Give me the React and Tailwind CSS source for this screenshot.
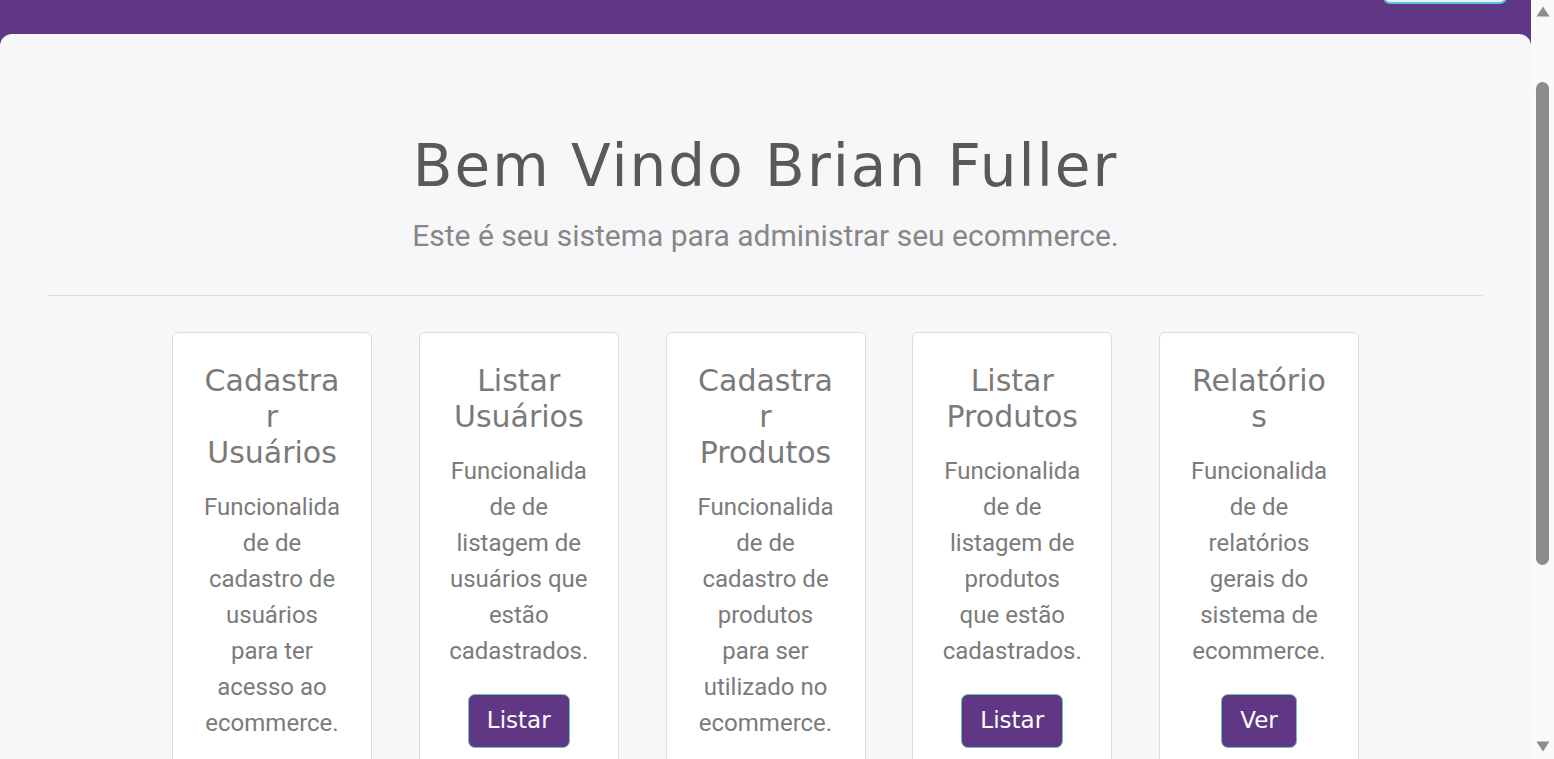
import React from "react";

const cards = [
  {
    title: "Cadastrar Usuários",
    text: "Funcionalidade de cadastro de usuários para ter acesso ao ecommerce.",
    action: "Cadastrar",
  },
  {
    title: "Listar Usuários",
    text: "Funcionalidade de listagem de usuários que estão cadastrados.",
    action: "Listar",
  },
  {
    title: "Cadastrar Produtos",
    text: "Funcionalidade de cadastro de produtos para ser utilizado no ecommerce.",
    action: "Cadastrar",
  },
  {
    title: "Listar Produtos",
    text: "Funcionalidade de listagem de produtos que estão cadastrados.",
    action: "Listar",
  },
  {
    title: "Relatórios",
    text: "Funcionalidade de relatórios gerais do sistema de ecommerce.",
    action: "Ver",
  },
];

const Card = ({ title, text, action }) => (
  <div className="w-[200px] shrink-0 bg-white border border-[#dcdde0] rounded-[6px] py-[30px] px-[29px] text-center break-words">
    <h3 className="font-['DejaVu_Sans',sans-serif] text-[30px] leading-[36px] text-[#7a7a7a]">
      {title}
    </h3>
    <p className="mt-[18px] font-['Roboto',sans-serif] text-[24px] leading-[36px] text-[#7b7b7b]">
      {text}
    </p>
    <button className="mt-[25px] inline-flex items-center h-[54px] px-[18px] rounded-[7px] border border-[#6cc3b5] bg-[#5f3784] text-white font-['DejaVu_Sans',sans-serif] text-[23px]">
      {action}
    </button>
  </div>
);

const ScrollBar = () => (
  <div className="w-[23px] shrink-0 bg-[#f9f9f9] flex flex-col items-center pt-[6px] pb-[7px]">
    <svg width="14" height="11" viewBox="0 0 14 11">
      <path d="M7 0.5 L13.5 10.5 L0.5 10.5 Z" fill="#8c8c8c" />
    </svg>
    <div className="mt-[65px] h-[483px] w-[13px] rounded-full bg-[#8c8c8c]" />
    <svg className="mt-auto" width="14" height="11" viewBox="0 0 14 11">
      <path d="M0.5 0.5 L13.5 0.5 L7 10.5 Z" fill="#8c8c8c" />
    </svg>
  </div>
);

export default function App() {
  return (
    <div className="h-screen flex overflow-hidden bg-[#f9f9f9]">
      <div className="flex-1 flex flex-col bg-[#5f3784]">
        <header className="h-[34px] shrink-0 flex justify-end items-start pr-[24px]">
          <div className="w-[124px] h-[44px] -mt-[40px] rounded-[7px] border-2 border-[#5bc0de] bg-[#e9f5f8]" />
        </header>
        <main className="flex-1 overflow-hidden bg-[#f7f7f9] rounded-t-[12px] px-[48px] pt-[98px] text-center">
          <h1 className="font-['DejaVu_Sans',sans-serif] text-[58px] leading-[1.2] tracking-[2px] text-[#595959]">
            Bem Vindo Brian Fuller
          </h1>
          <p className="mt-[13px] font-['Roboto',sans-serif] text-[30px] leading-[42px] text-[#878787]">
            Este é seu sistema para administrar seu ecommerce.
          </p>
          <hr className="mt-[38px] border-0 border-t border-[#dcdcdc]" />
          <div className="mt-[36px] flex justify-center items-start gap-[46.75px]">
            {cards.map((c) => (
              <Card key={c.title} {...c} />
            ))}
          </div>
        </main>
      </div>
      <ScrollBar />
    </div>
  );
}
